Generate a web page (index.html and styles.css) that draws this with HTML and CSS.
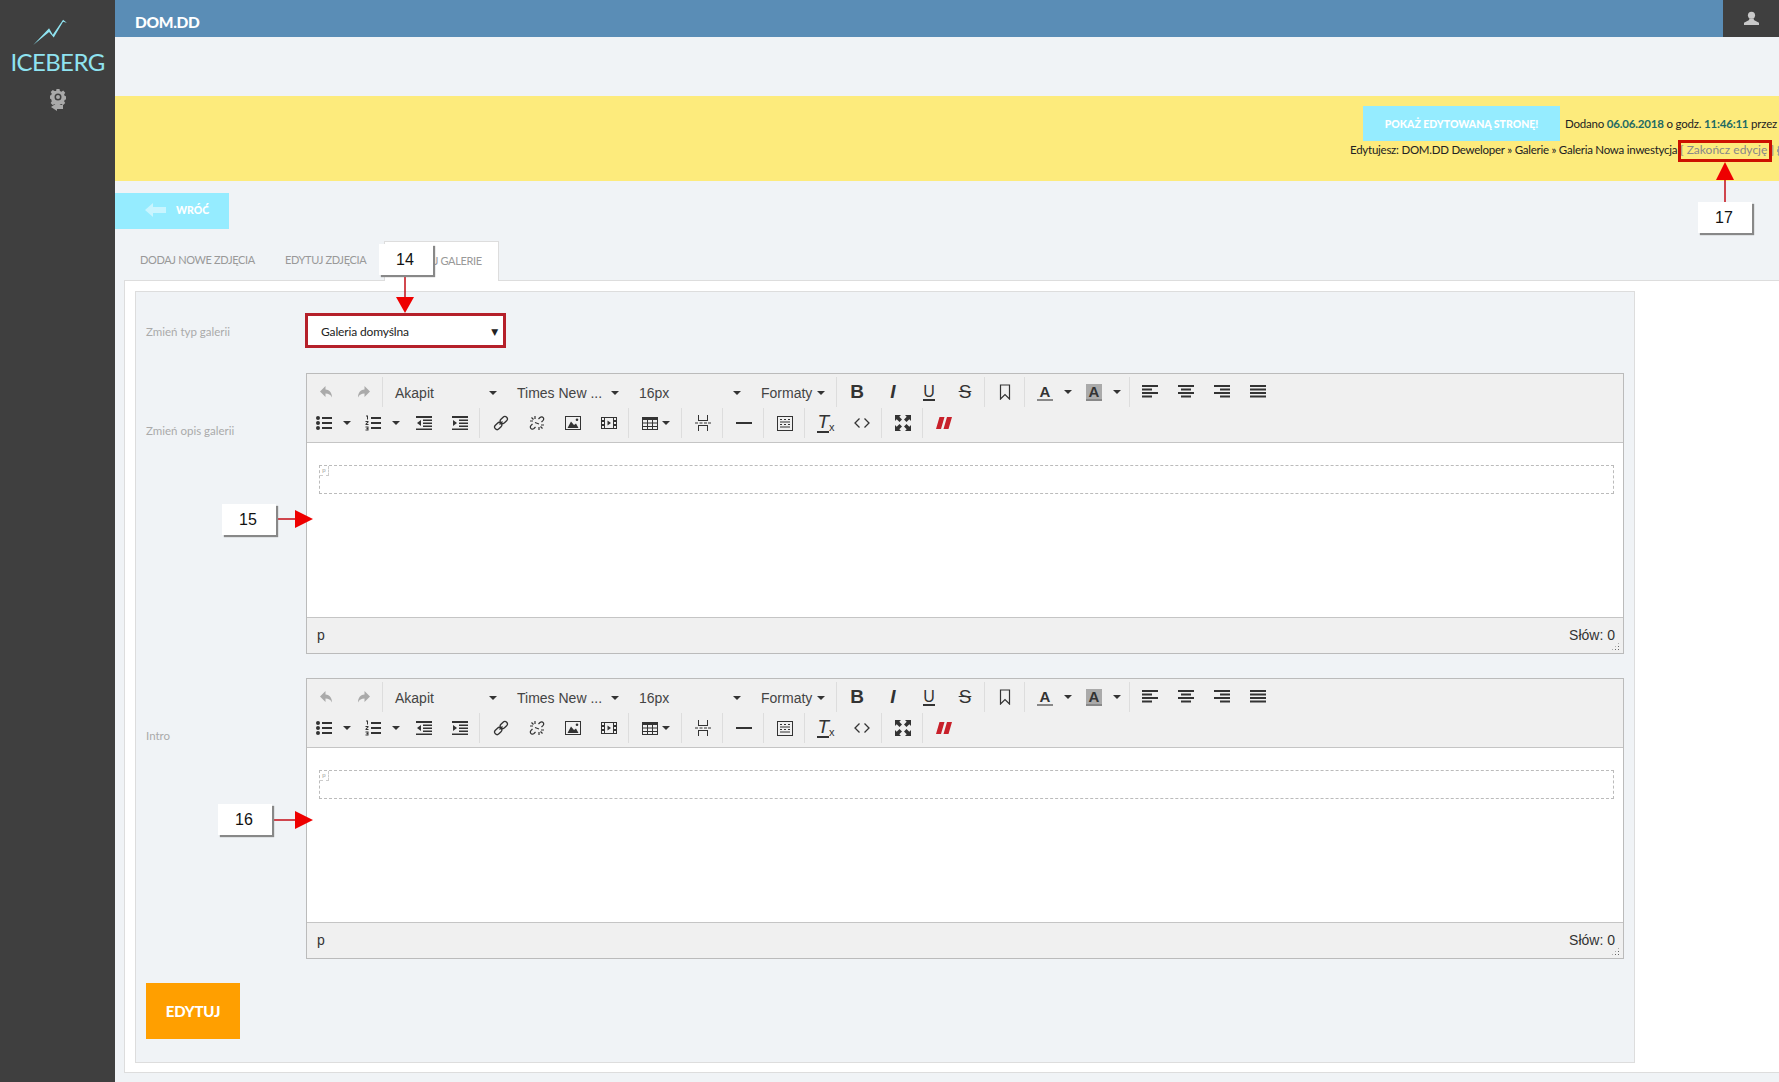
FILE: index.html
```html
<!DOCTYPE html>
<html lang="pl">
<head>
<meta charset="utf-8">
<title>DOM.DD</title>
<link rel="stylesheet" href="styles.css">
</head>
<body>
<svg class="defs" width="0" height="0" aria-hidden="true">
  <symbol id="i-undo" viewBox="0 0 16 16"><path d="M6.500 2 1 7.500 6.500 13V9.500c3 0 5 1 6.500 4 0-4-2-8-6.500-8z"/></symbol>
  <symbol id="i-redo" viewBox="0 0 16 16"><path d="M9.500 2 15 7.500 9.500 13V9.500c-3 0-5 1-6.500 4 0-4 2-8 6.500-8z"/></symbol>
  <symbol id="i-bookmark" viewBox="0 0 16 16"><path d="M3.500 1h9v14L8 10.500 3.500 15z" fill="none" stroke="currentColor" stroke-width="1.200"/></symbol>
  <symbol id="i-left" viewBox="0 0 16 16"><path d="M0 1h16v2H0zM0 4.500h10v2H0zM0 8h16v2H0zM0 11.500h10v2H0z"/></symbol>
  <symbol id="i-center" viewBox="0 0 16 16"><path d="M0 1h16v2H0zM3 4.500h10v2H3zM0 8h16v2H0zM3 11.500h10v2H3z"/></symbol>
  <symbol id="i-right" viewBox="0 0 16 16"><path d="M0 1h16v2H0zM6 4.500h10v2H6zM0 8h16v2H0zM6 11.500h10v2H6z"/></symbol>
  <symbol id="i-justify" viewBox="0 0 16 16"><path d="M0 1h16v2H0zM0 4.500h16v2H0zM0 8h16v2H0zM0 11.500h16v2H0z"/></symbol>
  <symbol id="i-bullist" viewBox="0 0 16 16"><circle cx="2" cy="3" r="2"/><circle cx="2" cy="8" r="2"/><circle cx="2" cy="13" r="2"/><path d="M6 2h10v2H6zM6 7h10v2H6zM6 12h10v2H6z"/></symbol>
  <symbol id="i-numlist" viewBox="0 0 16 16"><path d="M1 .5h2v4H2V1.500H1zM.5 6h3v1.200L1.800 9h1.700v1h-3V9l1.800-2H.5zM.5 11.500h3v4h-3v-1h2v-.500h-1v-1h1v-.500h-2zM6 2h10v2H6zM6 7h10v2H6zM6 12h10v2H6z"/></symbol>
  <symbol id="i-outdent" viewBox="0 0 16 16"><path d="M0 1h16v2H0zM7 4.500h9v1.500H7zM7 7.500h9V9H7zM7 10.500h9V12H7zM0 13.500h16V15H0zM5 5v6L1 8z"/></symbol>
  <symbol id="i-indent" viewBox="0 0 16 16"><path d="M0 1h16v2H0zM7 4.500h9v1.500H7zM7 7.500h9V9H7zM7 10.500h9V12H7zM0 13.500h16V15H0zM1 5v6l4-3z"/></symbol>
  <symbol id="i-link" viewBox="0 0 16 16"><g fill="none" stroke="currentColor" stroke-width="1.300"><path d="M6.500 9.500 9.500 6.500"/><rect x="8.300" y="1" width="5" height="8" rx="2.500" transform="rotate(45 10.800 5)"/><rect x="2.700" y="7" width="5" height="8" rx="2.500" transform="rotate(45 5.200 11)"/></g></symbol>
  <symbol id="i-unlink" viewBox="0 0 16 16"><g fill="none" stroke="currentColor" stroke-width="1.200"><path d="M9.500 4 11 2.500c1.200-1 2.500-.800 3.200.1.700.9.600 2-.3 3L12.500 7M6.500 12 5 13.500c-1.200 1-2.500.800-3.200-.1-.700-.9-.600-2 .3-3L3.500 9M6 7.500l4 1.500"/><path d="M6 1v3M1 6h3M10 12v3M12 10h3M2.500 2.500l2 2M11.500 11.500l2 2"/></g></symbol>
  <symbol id="i-image" viewBox="0 0 16 16"><path fill-rule="evenodd" d="M0 1h16v14H0zm1 1v12h14V2z"/><path d="M2.500 13 6 6.500 9 10l2-1.500 2.500 4.500z"/><circle cx="12" cy="4.800" r="1.300"/></symbol>
  <symbol id="i-media" viewBox="0 0 16 16"><path fill-rule="evenodd" d="M0 2h16v12H0zm1 1v2h2V3zm0 4v2h2V7zm0 4v2h2v-2zm12-8v2h2V3zm0 4v2h2V7zm0 4v2h2v-2zM4 3v10h8V3z"/><path d="M6.500 5.500 10 8l-3.500 2.500z"/></symbol>
  <symbol id="i-table" viewBox="0 0 16 16"><path fill-rule="evenodd" d="M0 2h16v13H0zm1 3v2.500h4V5zm5 0v2.500h4V5zm5 0v2.500h4V5zM1 8.500V11h4V8.500zm5 0V11h4V8.500zm5 0V11h4V8.500zM1 12v2h4v-2zm5 0v2h4v-2zm5 0v2h4v-2z"/></symbol>
  <symbol id="i-break" viewBox="0 0 16 16"><path d="M3 0h1v5h8V0h1v6H3zM3 16h1v-5h8v5h1v-6H3zM0 7.500h3v1H0zM4.500 7.500h3v1h-3zM9 7.500h3v1H9zM13 7.500h3v1h-3z"/></symbol>
  <symbol id="i-hr" viewBox="0 0 16 16"><path d="M0 7h16v2H0z"/></symbol>
  <symbol id="i-template" viewBox="0 0 16 16"><path fill-rule="evenodd" d="M0 1h16v15H0zm1 1v13h14V2z"/><path d="M3 4h2v1H3zM7 4h2v1H7zM11 4h2v1h-2zM3 6.500h10v1H3zM3 9h2v1H3zM7 9h2v1H7zM11 9h2v1h-2zM3 11.500h10v1H3z"/></symbol>
  <symbol id="i-code" viewBox="0 0 16 16"><path d="M5.500 3.500 1 8l4.500 4.500M10.500 3.500 15 8l-4.500 4.500" fill="none" stroke="currentColor" stroke-width="1.300"/></symbol>
  <symbol id="i-full" viewBox="0 0 16 16"><path d="M0 0h6L4.300 1.700 7 4.500 4.500 7 1.700 4.300 0 6zM16 0v6l-1.700-1.700L11.500 7 9 4.500l2.700-2.800L10 0zM0 16v-6l1.700 1.700L4.500 9 7 11.500l-2.700 2.800L6 16zM16 16h-6l1.700-1.700L9 11.500 11.500 9l2.800 2.700L16 10z"/></symbol>
  <symbol id="i-pause" viewBox="0 0 16 16"><path d="M3.500 2h5L5 14H0zM11 2h5l-3.500 12h-5z"/></symbol>
  <symbol id="i-gear" viewBox="0 0 16 16"><path fill-rule="evenodd" d="M6.500 0h3l.4 2 1.500.7 1.800-1.100 2 2.100-1.100 1.700.7 1.600 2 .400v3l-2 .400-.7 1.500 1.100 1.800-2.100 2-1.700-1.100-1.600.7-.4 2h-3l-.4-2-1.500-.7-1.800 1.100-2-2.100 1.100-1.700L1.100 10l-2-.4v-3l2-.4.700-1.500L.7 3l2.100-2 1.700 1.100L6.100 2zM8 4.500a3.500 3.500 0 1 0 0 7 3.500 3.500 0 0 0 0-7zM8 6a2 2 0 1 1 0 4 2 2 0 0 1 0-4z"/></symbol>
</svg>

<div class="app">
  <aside class="sidebar">
    <svg class="logo-mark" viewBox="0 0 36 30" aria-hidden="true"><path d="M0 29 L17 11 L21 18 L32 2 L36 5 L32 4 L22 21 L17 15 Z"/></svg>
    <div class="logo-text">ICEBERG</div>
    <svg class="side-gear" viewBox="0 0 16 22" aria-hidden="true"><use href="#i-gear" width="16" height="16"/><path d="M7 14 1 18l6 4v-2h6v-4H7z"/></svg>
  </aside>

  <main class="main">
    <header class="topbar">
      <div class="brand">DOM.DD</div>
      <div class="user"><svg viewBox="0 0 16 16" class="user-icon" aria-hidden="true"><circle cx="8" cy="4.500" r="3.800"/><path d="M5.500 8h5v1.500L16 12.500V15H0v-2.500l5.500-3z"/></svg></div>
    </header>

    <section class="notice">
      <div class="notice-line">
        <a class="show-btn">POKAŻ EDYTOWANĄ STRONĘ!</a>
        <span>Dodano <b class="teal">06.06.2018</b> o godz. <b class="teal">11:46:11</b> przez</span>
      </div>
      <div class="notice-path">Edytujesz: DOM.DD Deweloper » Galerie » Galeria Nowa inwestycja <span class="end-edit">[ Zakończ edycję ]</span> <svg class="mini-gear" aria-hidden="true"><use href="#i-gear"/></svg></div>
    </section>

    <a class="back">
      <svg class="back-arrow" viewBox="0 0 21 14" aria-hidden="true"><path d="M8 0 0 7l8 7V10h13V4H8z"/></svg>
      <span>WRÓĆ</span>
    </a>

    <nav class="tabs">
      <a class="tab tab-first">DODAJ NOWE ZDJĘCIA</a>
      <a class="tab tab-second">EDYTUJ ZDJĘCIA</a>
      <a class="tab tab-active">EDYTUJ GALERIE</a>
    </nav>

    <section class="outer">
      <form class="inner">
        <label class="lbl">Zmień typ galerii</label>
        <div class="select"><span>Galeria domyślna</span><span class="select-arrow">▼</span></div>

        <label class="lbl lbl-top">Zmień opis galerii</label>
        <div class="editor">
          <div class="toolbar">
            <div class="row">
              <div class="grp"><i class="btn off"><svg><use href="#i-undo"/></svg></i><i class="btn off"><svg><use href="#i-redo"/></svg></i></div>
              <div class="grp grp-list"><span class="lb w122">Akapit<u class="car"></u></span><span class="lb w122">Times New ...<u class="car"></u></span><span class="lb w122">16px<u class="car"></u></span><span class="lb w85">Formaty<u class="car"></u></span></div>
              <div class="grp"><i class="btn"><b class="g-b">B</b></i><i class="btn"><b class="g-i">I</b></i><i class="btn"><span class="g-u">U</span></i><i class="btn"><span class="g-s">S</span></i></div>
              <div class="grp"><i class="btn"><svg><use href="#i-bookmark"/></svg></i></div>
              <div class="grp grp-color"><i class="btn split split-a"><span class="g-a">A</span><u class="car"></u></i><i class="btn split split-a"><span class="g-a g-bg">A</span><u class="car"></u></i></div>
              <div class="grp grp-last"><i class="btn"><svg><use href="#i-left"/></svg></i><i class="btn"><svg><use href="#i-center"/></svg></i><i class="btn"><svg><use href="#i-right"/></svg></i><i class="btn"><svg><use href="#i-justify"/></svg></i></div>
            </div>
            <div class="row row-two">
              <div class="grp"><i class="btn split split-list"><svg><use href="#i-bullist"/></svg><u class="car"></u></i><i class="btn split split-list split-num"><svg><use href="#i-numlist"/></svg><u class="car"></u></i><i class="btn"><svg><use href="#i-outdent"/></svg></i><i class="btn"><svg><use href="#i-indent"/></svg></i></div>
              <div class="grp"><i class="btn"><svg><use href="#i-link"/></svg></i><i class="btn"><svg><use href="#i-unlink"/></svg></i><i class="btn"><svg><use href="#i-image"/></svg></i><i class="btn"><svg><use href="#i-media"/></svg></i></div>
              <div class="grp"><i class="btn split split-table"><svg><use href="#i-table"/></svg><u class="car"></u></i></div>
              <div class="grp"><i class="btn"><svg><use href="#i-break"/></svg></i></div>
              <div class="grp"><i class="btn"><svg><use href="#i-hr"/></svg></i></div>
              <div class="grp"><i class="btn"><svg><use href="#i-template"/></svg></i></div>
              <div class="grp"><i class="btn"><span class="g-t"><span class="g-tt">T</span><small>x</small></span></i><i class="btn"><svg><use href="#i-code"/></svg></i></div>
              <div class="grp"><i class="btn"><svg><use href="#i-full"/></svg></i></div>
              <div class="grp grp-last"><i class="btn red"><svg><use href="#i-pause"/></svg></i></div>
            </div>
          </div>
          <div class="content"><div class="para"><span class="para-tag">p</span></div></div>
          <div class="status"><span>p</span><span>Słów: 0</span><span class="grip"></span></div>
        </div>

        <label class="lbl lbl-top">Intro</label>
        <div class="editor">
          <div class="toolbar">
            <div class="row">
              <div class="grp"><i class="btn off"><svg><use href="#i-undo"/></svg></i><i class="btn off"><svg><use href="#i-redo"/></svg></i></div>
              <div class="grp grp-list"><span class="lb w122">Akapit<u class="car"></u></span><span class="lb w122">Times New ...<u class="car"></u></span><span class="lb w122">16px<u class="car"></u></span><span class="lb w85">Formaty<u class="car"></u></span></div>
              <div class="grp"><i class="btn"><b class="g-b">B</b></i><i class="btn"><b class="g-i">I</b></i><i class="btn"><span class="g-u">U</span></i><i class="btn"><span class="g-s">S</span></i></div>
              <div class="grp"><i class="btn"><svg><use href="#i-bookmark"/></svg></i></div>
              <div class="grp grp-color"><i class="btn split split-a"><span class="g-a">A</span><u class="car"></u></i><i class="btn split split-a"><span class="g-a g-bg">A</span><u class="car"></u></i></div>
              <div class="grp grp-last"><i class="btn"><svg><use href="#i-left"/></svg></i><i class="btn"><svg><use href="#i-center"/></svg></i><i class="btn"><svg><use href="#i-right"/></svg></i><i class="btn"><svg><use href="#i-justify"/></svg></i></div>
            </div>
            <div class="row row-two">
              <div class="grp"><i class="btn split split-list"><svg><use href="#i-bullist"/></svg><u class="car"></u></i><i class="btn split split-list split-num"><svg><use href="#i-numlist"/></svg><u class="car"></u></i><i class="btn"><svg><use href="#i-outdent"/></svg></i><i class="btn"><svg><use href="#i-indent"/></svg></i></div>
              <div class="grp"><i class="btn"><svg><use href="#i-link"/></svg></i><i class="btn"><svg><use href="#i-unlink"/></svg></i><i class="btn"><svg><use href="#i-image"/></svg></i><i class="btn"><svg><use href="#i-media"/></svg></i></div>
              <div class="grp"><i class="btn split split-table"><svg><use href="#i-table"/></svg><u class="car"></u></i></div>
              <div class="grp"><i class="btn"><svg><use href="#i-break"/></svg></i></div>
              <div class="grp"><i class="btn"><svg><use href="#i-hr"/></svg></i></div>
              <div class="grp"><i class="btn"><svg><use href="#i-template"/></svg></i></div>
              <div class="grp"><i class="btn"><span class="g-t"><span class="g-tt">T</span><small>x</small></span></i><i class="btn"><svg><use href="#i-code"/></svg></i></div>
              <div class="grp"><i class="btn"><svg><use href="#i-full"/></svg></i></div>
              <div class="grp grp-last"><i class="btn red"><svg><use href="#i-pause"/></svg></i></div>
            </div>
          </div>
          <div class="content"><div class="para"><span class="para-tag">p</span></div></div>
          <div class="status"><span>p</span><span>Słów: 0</span><span class="grip"></span></div>
        </div>

        <button type="button" class="submit">EDYTUJ</button>
      </form>
    </section>
  </main>
</div>

<!-- Instruction annotations laid over the screenshot -->
<div class="mark mark-select"></div>
<div class="mark mark-end"></div>
<svg class="arrows" width="1779" height="1082" aria-hidden="true">
  <path class="shaft" d="M405 274V298M1725 164V202M276 519H296M272 820H296"/>
  <path class="head" d="M396 297H414L405 313ZM1725 162L1716 180H1734ZM295 510V528L313 519ZM295 811V829L313 820Z"/>
</svg>
<div class="callout c14">14</div>
<div class="callout c15">15</div>
<div class="callout c16">16</div>
<div class="callout c17">17</div>
</body>
</html>
```
FILE: styles.css
```css
* { box-sizing: border-box; }
html, body { margin: 0; height: 100%; overflow: hidden; }
body { font-family: Lato, "Open Sans", sans-serif; font-size: 12px; color: #222; background: #f0f3f6; position: relative; }
.defs { position: absolute; }
.app { display: flex; height: 1082px; }

.sidebar { width: 115px; flex: none; background: #3f3f3f; display: flex; flex-direction: column; align-items: center; }
.logo-mark { width: 34px; height: 28px; margin-top: 18px; fill: #8fe3f0; align-self: flex-start; margin-left: 33px; }
.logo-text { font-size: 24px; line-height: 28px; color: #8fe3f0; margin-top: 2px; letter-spacing: -.6px; }
.side-gear { width: 16px; height: 22px; margin-top: 13px; fill: #a9a9a9; }

.main { flex: 1; min-width: 0; display: flex; flex-direction: column; }
.topbar { height: 37px; background: #5a8db6; display: flex; justify-content: space-between; flex: none; }
.brand { color: #fff; font-weight: 900; font-size: 15.500px; line-height: 44px; height: 37px; padding-left: 20px; letter-spacing: -.3px; }
.user { width: 56px; background: #3f3f3f; display: flex; align-items: center; justify-content: center; }
.user-icon { width: 15px; height: 15px; fill: #c9c9c9; }

.notice { margin-top: 59px; height: 85px; background: #fdeb7c; flex: none; overflow: hidden; padding: 10px 0 0 1248px; white-space: nowrap; color: #222; font-size: 11.500px; letter-spacing: -.2px; }
.notice-line { display: flex; align-items: center; gap: 5px; width: 600px; }
.show-btn { width: 197px; height: 35px; background: #95ecff; color: #fff; font-weight: 900; font-size: 10.500px; letter-spacing: 0; display: flex; align-items: center; justify-content: center; }
.teal { color: #1d6a63; font-weight: 700; }
.notice-path { margin: 0 0 0 -13px; line-height: 18px; letter-spacing: -.25px; }
.end-edit { color: #888; letter-spacing: 0; font-size: 12px; }
.mini-gear { width: 11px; height: 11px; vertical-align: -2px; fill: #999; }

.back { margin-top: 12px; width: 114px; height: 36px; flex: none; background: #95ecff; color: #fff; font-weight: 900; font-size: 10.500px; display: flex; align-items: center; padding: 0 0 2px 30px; gap: 10px; }
.back-arrow { width: 21px; height: 14px; fill: #c8f5ff; }

.tabs { margin-top: 12px; height: 39px; flex: none; display: flex; padding-left: 10px; position: relative; z-index: 1; white-space: nowrap; }
.tab { color: #999; padding: 0 16px 0 15px; line-height: 37px; font-size: 11px; letter-spacing: -.35px; height: 39px; flex: none; }
.tab-first { width: 145px; }
.tab-second { width: 114px; padding-left: 15px; }
.tab-active { background: #fff; border: 1px solid #ddd; border-bottom: 0; width: 115px; padding: 0 0 0 15px; height: 40px; }

.outer { margin-left: 9px; height: 793px; flex: none; background: #fff; border: 1px solid #ddd; border-right: 0; padding: 10px 0 0 10px; }
.inner { width: 1500px; height: 772px; background: #f0f3f6; border: 1px solid #ddd; padding: 21px 10px 0 10px; display: grid; grid-template-columns: 160px 1fr; grid-template-rows: 36px 281px 281px auto; row-gap: 24px; align-items: center; }
.lbl { color: #aaa; font-size: 11.500px; }
.lbl-top { align-self: start; margin-top: 51px; }

.select { height: 35px; align-self: start; background: #fff; width: 200px; padding: 2px 8px 0 15px; display: flex; align-items: center; justify-content: space-between; color: #222; letter-spacing: -.15px; }
.select-arrow { font-size: 9px; font-family: "DejaVu Sans", sans-serif; }

.editor { height: 281px; border: 1px solid #bbb; background: #fff; font-family: "Liberation Sans", sans-serif; font-size: 14px; color: #333; display: flex; flex-direction: column; }
.toolbar { height: 69px; background: #f0f0f0; border-bottom: 1px solid #c5c5c5; padding: 3px 0 0 2px; flex: none; }
.row { display: flex; height: 32px; }
.row-two { margin-top: -1px; }
.grp { display: flex; align-items: center; padding: 0 1px 0 0; margin-right: 2px; height: 30px; border-right: 1px solid #ddd; }
.row-two .grp { margin-right: 3px; }
.grp-list { padding-right: 0; }
.grp-color { padding-right: 4px; }
.grp-last { border-right: 0; }
.btn { width: 36px; height: 30px; display: flex; align-items: center; justify-content: center; color: #333; fill: currentColor; font-style: normal; }
.btn svg { width: 16px; height: 16px; }
.off { color: #aaa; }
.red { color: #c8202a; }
.split { width: 49px; justify-content: flex-start; }
.split-a { padding-left: 10px; gap: 11px; }
.split-list { padding-left: 7px; gap: 11px; }
.split-num { width: 48px; }
.split-table { width: 48px; padding-left: 10px; gap: 4px; }
.lb { height: 30px; display: flex; align-items: center; justify-content: space-between; padding: 2px 10px 0 10px; color: #444; }
.w122 { width: 122px; }
.w85 { width: 85px; padding-right: 11px; }
.car { display: block; width: 0; height: 0; border: 4px solid transparent; border-top-color: #333; border-bottom: 0; flex: none; text-decoration: none; }
.g-b { font-size: 19px; color: #333; font-weight: 700; }
.g-i { font-size: 19px; font-weight: 700; font-style: italic; color: #333; }
.g-u { font-size: 16px; line-height: 15px; border-bottom: 2px solid #333; font-weight: 400; }
.g-s { font-size: 19px; text-decoration: line-through; }
.g-a { width: 16px; height: 17px; font-size: 15px; font-weight: 700; line-height: 15px; text-align: center; border-bottom: 2px solid #888; flex: none; }
.g-bg { background: #aaa; }
.g-t { display: flex; align-items: flex-end; }
.g-tt { font-size: 19px; font-style: italic; border-bottom: 2px solid #333; line-height: 18px; }
.g-t small { font-size: 11px; line-height: 12px; }

.content { flex: 1; padding: 22px 9px 0 12px; background: #fff; }
.para { height: 29px; border: 1px dashed #bbb; position: relative; }
.para-tag { position: absolute; left: 0; top: 0; width: 9px; height: 10px; border-right: 1px dashed #ccc; border-bottom: 1px dashed #ccc; font: 6px/8px "Liberation Sans", sans-serif; color: #999; text-align: center; }

.status { height: 36px; flex: none; background: #f0f0f0; border-top: 1px solid #c5c5c5; display: flex; align-items: center; justify-content: space-between; padding: 0 8px 2px 10px; position: relative; }
.grip { position: absolute; right: 3px; bottom: 2px; width: 9px; height: 9px; background-image: radial-gradient(#666 1px, transparent 1px); background-size: 3px 3px; clip-path: polygon(100% 0, 100% 100%, 0 100%); }

.submit { grid-column: 1; align-self: start; width: 94px; height: 56px; background: #ff9f00; border: 0; color: #fff; font: 900 15px Lato, sans-serif; letter-spacing: -.2px; padding: 0; }

.mark { position: absolute; z-index: 2; border: 3px solid #b5202a; }
.mark-select { left: 305px; top: 313px; width: 201px; height: 35px; }
.mark-end { left: 1678px; top: 140px; width: 94px; height: 22px; border-color: #cc1100; }
.arrows { position: absolute; z-index: 2; left: 0; top: 0; pointer-events: none; }
.shaft { stroke: #c40d16; stroke-width: 1.500; fill: none; }
.head { fill: #ee0000; }
.callout { position: absolute; z-index: 2; width: 54px; height: 31px; background: #fff; box-shadow: 2px 2px 1px #888; font: 16px/31px "Liberation Sans", sans-serif; text-align: center; color: #111; padding-right: 2px; }
.c14 { left: 379px; top: 244px; }
.c15 { left: 222px; top: 504px; }
.c16 { left: 218px; top: 804px; }
.c17 { left: 1698px; top: 202px; }
```
